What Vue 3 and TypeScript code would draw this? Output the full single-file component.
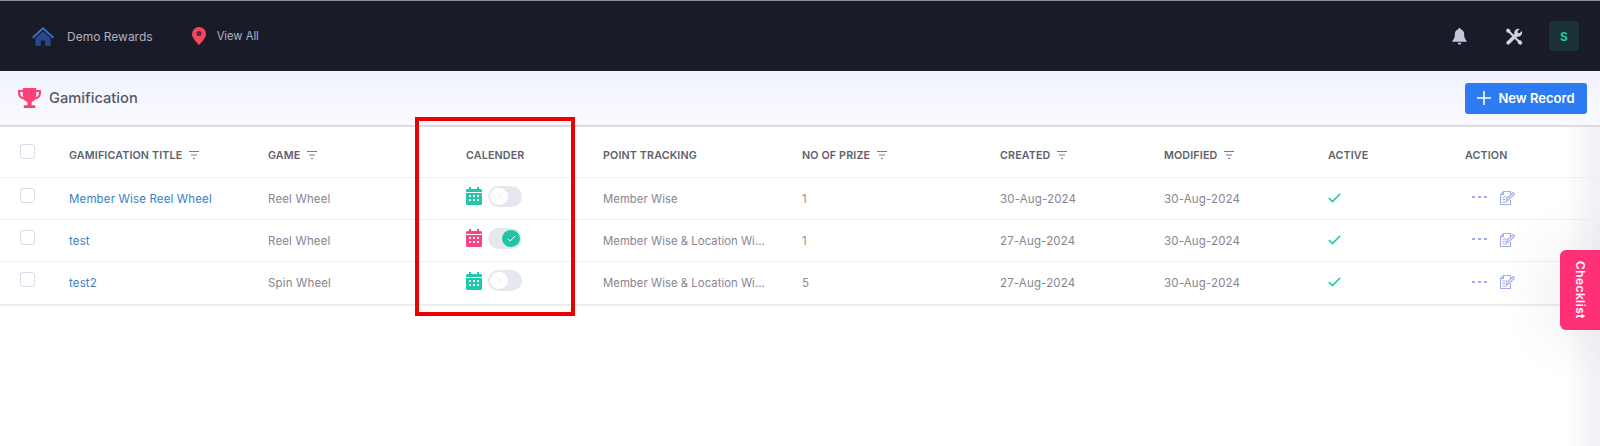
<script setup lang="ts">
interface Row {
  title: string;
  game: string;
  calendarOn: boolean;
  tracking: string;
  prizes: string;
  created: string;
  modified: string;
}
const rows: Row[] = [
  { title: 'Member Wise Reel Wheel', game: 'Reel Wheel', calendarOn: false, tracking: 'Member Wise', prizes: '1', created: '30-Aug-2024', modified: '30-Aug-2024' },
  { title: 'test', game: 'Reel Wheel', calendarOn: true, tracking: 'Member Wise & Location Wise', prizes: '1', created: '27-Aug-2024', modified: '30-Aug-2024' },
  { title: 'test2', game: 'Spin Wheel', calendarOn: false, tracking: 'Member Wise & Location Wise', prizes: '5', created: '27-Aug-2024', modified: '30-Aug-2024' },
];
const headers = [
  { label: 'GAMIFICATION TITLE', filter: true },
  { label: 'GAME', filter: true },
  { label: 'CALENDER', filter: false },
  { label: 'POINT TRACKING', filter: false },
  { label: 'NO OF PRIZE', filter: true },
  { label: 'CREATED', filter: true },
  { label: 'MODIFIED', filter: true },
  { label: 'ACTIVE', filter: false },
  { label: 'ACTION', filter: false },
];
</script>

<template>
  <div class="page">
    <header class="nav">
      <div class="nav-item home">
        <svg width="22" height="19" viewBox="0 0 22 19"><path d="M11 0 0 10l1.200 1.400L11 2.600l9.800 8.800L22 10z" fill="#3f70c4"/><path d="M3.500 11 11 4.300 18.500 11v8h-5.300v-5.500H8.800V19H3.500z" fill="#26478f"/></svg>
        <span>Demo Rewards</span>
      </div>
      <div class="nav-item pin">
        <svg width="14" height="18" viewBox="0 0 14 18"><path d="M7 0a7 7 0 0 0-7 7c0 4.200 4.500 8.300 7 11 2.500-2.700 7-6.800 7-11a7 7 0 0 0-7-7z" fill="#f4465f"/><circle cx="7" cy="6.500" r="2.600" fill="#5c2a3c"/></svg>
        <span>View All</span>
      </div>
      <div class="nav-right">
        <svg class="bell" width="15" height="17" viewBox="0 0 15 18"><path d="M7.500 0c.8 0 1.300.6 1.300 1.400C11 2 12.400 4 12.400 6.400c0 4 1 5.500 2.600 7.200v.9H0v-.9C1.600 11.900 2.600 10.400 2.600 6.400 2.600 4 4 2 6.200 1.400 6.200.6 6.700 0 7.500 0z" fill="#c6c7da"/><path d="M5.500 15.500h4a2 2 0 0 1-4 0z" fill="#c6c7da"/></svg>
        <svg class="tools" width="17" height="17" viewBox="0 0 17 17"><path d="M1.500.500 0 2l1 2.500 2 .5 8.500 8.500.5 2 2.500 1.500 2-2-1.500-2.500-2-.5L4.500 3.500 4 1.500z" fill="#d3d3e0"/><path d="M15.800 2.900 13.500 5.200 11.800 4.800 11.400 3.200 13.700.900A4.300 4.300 0 0 0 8.400 6.200L.9 13.400a1.900 1.900 0 0 0 2.700 2.700l7.300-7.400a4.300 4.300 0 0 0 4.900-5.800z" fill="#d3d3e0"/></svg>
        <div class="avatar">S</div>
      </div>
    </header>

    <section class="subhead">
      <div class="subtitle">
        <svg width="23" height="20" viewBox="0 0 24 21"><path d="M5 0h14v2h5v3.500c0 3.500-2.500 6-6 6.500-1 1.300-2.200 2.200-3.800 2.600V18H18v3H6v-3h3.800v-3.400C8.200 14.200 7 13.300 6 12c-3.500-.5-6-3-6-6.500V2h5zM2.200 4.200v1.300c0 2 1.200 3.500 3 4.100A20 20 0 0 1 5 4.200zm19.600 0H19a20 20 0 0 1-.2 5.400c1.800-.6 3-2.100 3-4.100z" fill="#ff3f78"/></svg>
        <span>Gamification</span>
      </div>
      <button class="new-btn" type="button">
        <svg width="14" height="14" viewBox="0 0 14 14"><path d="M7 0v14M0 7h14" stroke="#fff" stroke-width="1.600"/></svg>
        <span>New Record</span>
      </button>
    </section>

    <section class="table">
      <div class="row head">
        <div class="cell check"><span class="box"></span></div>
        <div v-for="h in headers" :key="h.label" class="cell label">
          <span>{{ h.label }}</span>
          <svg v-if="h.filter" class="filter" width="10" height="8" viewBox="0 0 10 8"><path d="M0 .5h10M2 4h6M4 7.500h2" stroke="#777a88" stroke-width="1"/></svg>
        </div>
      </div>
      <div v-for="r in rows" :key="r.title" class="row body">
        <div class="cell check"><span class="box"></span></div>
        <div class="cell link">{{ r.title }}</div>
        <div class="cell">{{ r.game }}</div>
        <div class="cell cal">
          <svg width="16" height="18" viewBox="0 0 16 18">
            <g :fill="r.calendarOn ? '#ff3f86' : '#22c6ab'">
              <path d="M3 0h2v2h6V0h2v2h1.500A1.500 1.500 0 0 1 16 3.500V5H0V3.500A1.500 1.500 0 0 1 1.500 2H3z"/>
              <path fill-rule="evenodd" d="M0 6h16v10.500a1.500 1.500 0 0 1-1.500 1.500h-13A1.500 1.500 0 0 1 0 16.500zM3 8v2h2V8zm4 0v2h2V8zm4 0v2h2V8zm-8 4v2h2v-2zm4 0v2h2v-2zm4 0v2h2v-2z"/>
            </g>
          </svg>
          <span class="toggle" :class="{ on: r.calendarOn }">
            <span class="knob">
              <svg v-if="r.calendarOn" width="9" height="7" viewBox="0 0 9 7"><path d="M.8 3.800 3.200 6 8.200.8" fill="none" stroke="#fff" stroke-width="1"/></svg>
              <svg v-else width="7" height="7" viewBox="0 0 7 7"><path d="M.5.500l6 6M6.500.500l-6 6" stroke="#eceef3" stroke-width="1"/></svg>
            </span>
          </span>
        </div>
        <div class="cell"><span class="clip">{{ r.tracking }}</span></div>
        <div class="cell prize">{{ r.prizes }}</div>
        <div class="cell">{{ r.created }}</div>
        <div class="cell">{{ r.modified }}</div>
        <div class="cell tick">
          <svg width="13" height="10" viewBox="0 0 13 10"><path d="M.8 5 4.500 8.600 12.200.8" fill="none" stroke="#22c6ab" stroke-width="1.600"/></svg>
        </div>
        <div class="cell actions">
          <span class="dots"><i></i><i></i><i></i></span>
          <svg width="15" height="15" viewBox="0 0 15 15" fill="none" stroke="#a3aee6" stroke-width="1.100">
            <path d="M10.500 5V1.500h-7L.5 4.500v10h10V10"/>
            <path d="M3.500 1.500v3h-3M2.500 7h5M2.500 9.500h3M2.500 12h5"/>
            <path d="M6.500 10.500 7 8.500 13 2.500l1.500 1.500-6 6z"/>
          </svg>
        </div>
      </div>
    </section>

    <div class="annotation"></div>
    <div class="edge-shade"></div>
    <div class="checklist"><span>Checklist</span></div>
  </div>
</template>

<style scoped>
.page {
  position: relative;
  width: 1600px;
  height: 446px;
  overflow: hidden;
  background: #fff;
  font-family: Inter, "Liberation Sans", sans-serif;
}
.nav {
  height: 70px;
  border-top: 1px solid #8f8f94;
  background: #1a1b29;
  display: flex;
  align-items: center;
  padding: 0 21px 0 32px;
  box-sizing: content-box;
}
.nav-item {
  display: flex;
  align-items: center;
  color: #b0b1c0;
}
.home { gap: 13px; margin-right: 39px; font-size: 12px; }
.pin { gap: 11px; font-size: 11.200px; }
.nav-right {
  margin-left: auto;
  display: flex;
  align-items: center;
}
.bell { margin-right: 39px; }
.tools { margin-right: 26px; }
.avatar {
  width: 30px;
  height: 30px;
  border-radius: 3px;
  background: #1a3137;
  color: #1fc4a5;
  font-size: 12px;
  font-weight: 700;
  display: flex;
  align-items: center;
  justify-content: center;
}
.subhead {
  height: 54px;
  background: linear-gradient(#eff1fb, #f8f9ff 65%);
  border-bottom: 2px solid #dcdcd9;
  display: flex;
  align-items: center;
  justify-content: space-between;
  padding: 0 13px 0 18px;
}
.subtitle {
  display: flex;
  align-items: center;
  gap: 8px;
  color: #555766;
  font-size: 14.700px;
  font-weight: 500;
}
.new-btn {
  width: 122px;
  height: 31px;
  border: none;
  border-radius: 3px;
  background: #2d7bf2;
  color: #fff;
  font-family: inherit;
  font-size: 13px;
  font-weight: 600;
  display: flex;
  align-items: center;
  justify-content: center;
  gap: 7px;
}
.table { border-bottom: 2px solid #ecedf3; }
.row {
  display: grid;
  grid-template-columns: 69px 199px 198px 137px 199px 198px 164px 164px 137px 135px;
  align-items: center;
  border-bottom: 1px solid #eeeff5;
  box-sizing: border-box;
}
.row:last-child { border-bottom: none; }
.head {
  height: 51px;
  color: #5d5f6d;
  font-size: 10.700px;
  font-weight: 600;
  letter-spacing: .15px;
}
.label { padding-top: 6px; }
.body {
  height: 42px;
  color: #85868f;
  font-size: 11.500px;
  letter-spacing: .15px;
}
.cell {
  display: flex;
  align-items: center;
  min-width: 0;
  white-space: nowrap;
}
.filter { margin-left: 7px; }
.check { padding-left: 20px; }
.box {
  width: 15px;
  height: 15px;
  margin-top: -7px;
  box-sizing: border-box;
  border: 1px solid #d9dbe6;
  border-radius: 3px;
  background: #fff;
}
.head .box { margin-top: -2px; }
.link { color: #3a7fc4; }
.prize { color: #a08a80; }
.cal { gap: 6px; margin-top: -5px; }
.clip {
  display: block;
  width: 163px;
  overflow: hidden;
  text-overflow: ellipsis;
  font-size: 11.300px;
  letter-spacing: .05px;
}
.toggle {
  width: 34px;
  height: 21px;
  padding: 2px;
  box-sizing: border-box;
  border-radius: 11px;
  background: #e6e8f0;
  display: flex;
}
.toggle.on { justify-content: flex-end; }
.knob {
  width: 18px;
  height: 17px;
  border-radius: 50%;
  background: #fff;
  display: flex;
  align-items: center;
  justify-content: center;
}
.toggle.on .knob { background: #1fc4a5; }
.tick { margin-top: -2px; }
.actions { gap: 13px; padding-left: 7px; margin-top: -3px; }
.dots { display: flex; gap: 3px; }
.dots i {
  width: 3px;
  height: 2px;
  background: #a4aee6;
}
.annotation {
  position: absolute;
  left: 415px;
  top: 117px;
  width: 160px;
  height: 199px;
  box-sizing: border-box;
  border: 4px solid #ec0000;
  pointer-events: none;
}
.edge-shade {
  position: absolute;
  right: 0;
  top: 127px;
  bottom: 0;
  width: 36px;
  background: linear-gradient(to right, rgba(235, 235, 242, 0), rgba(235, 235, 242, .75));
  pointer-events: none;
}
.checklist {
  position: absolute;
  left: 1560px;
  top: 250px;
  width: 40px;
  height: 80px;
  border-radius: 6px 0 0 6px;
  background: #ff3076;
  box-shadow: 0 0 60px rgba(60, 60, 90, .14);
  color: #fff;
  font-size: 12px;
  font-weight: 600;
  display: flex;
  align-items: center;
  justify-content: center;
}
.checklist span { writing-mode: vertical-rl; letter-spacing: .4px; }
</style>
